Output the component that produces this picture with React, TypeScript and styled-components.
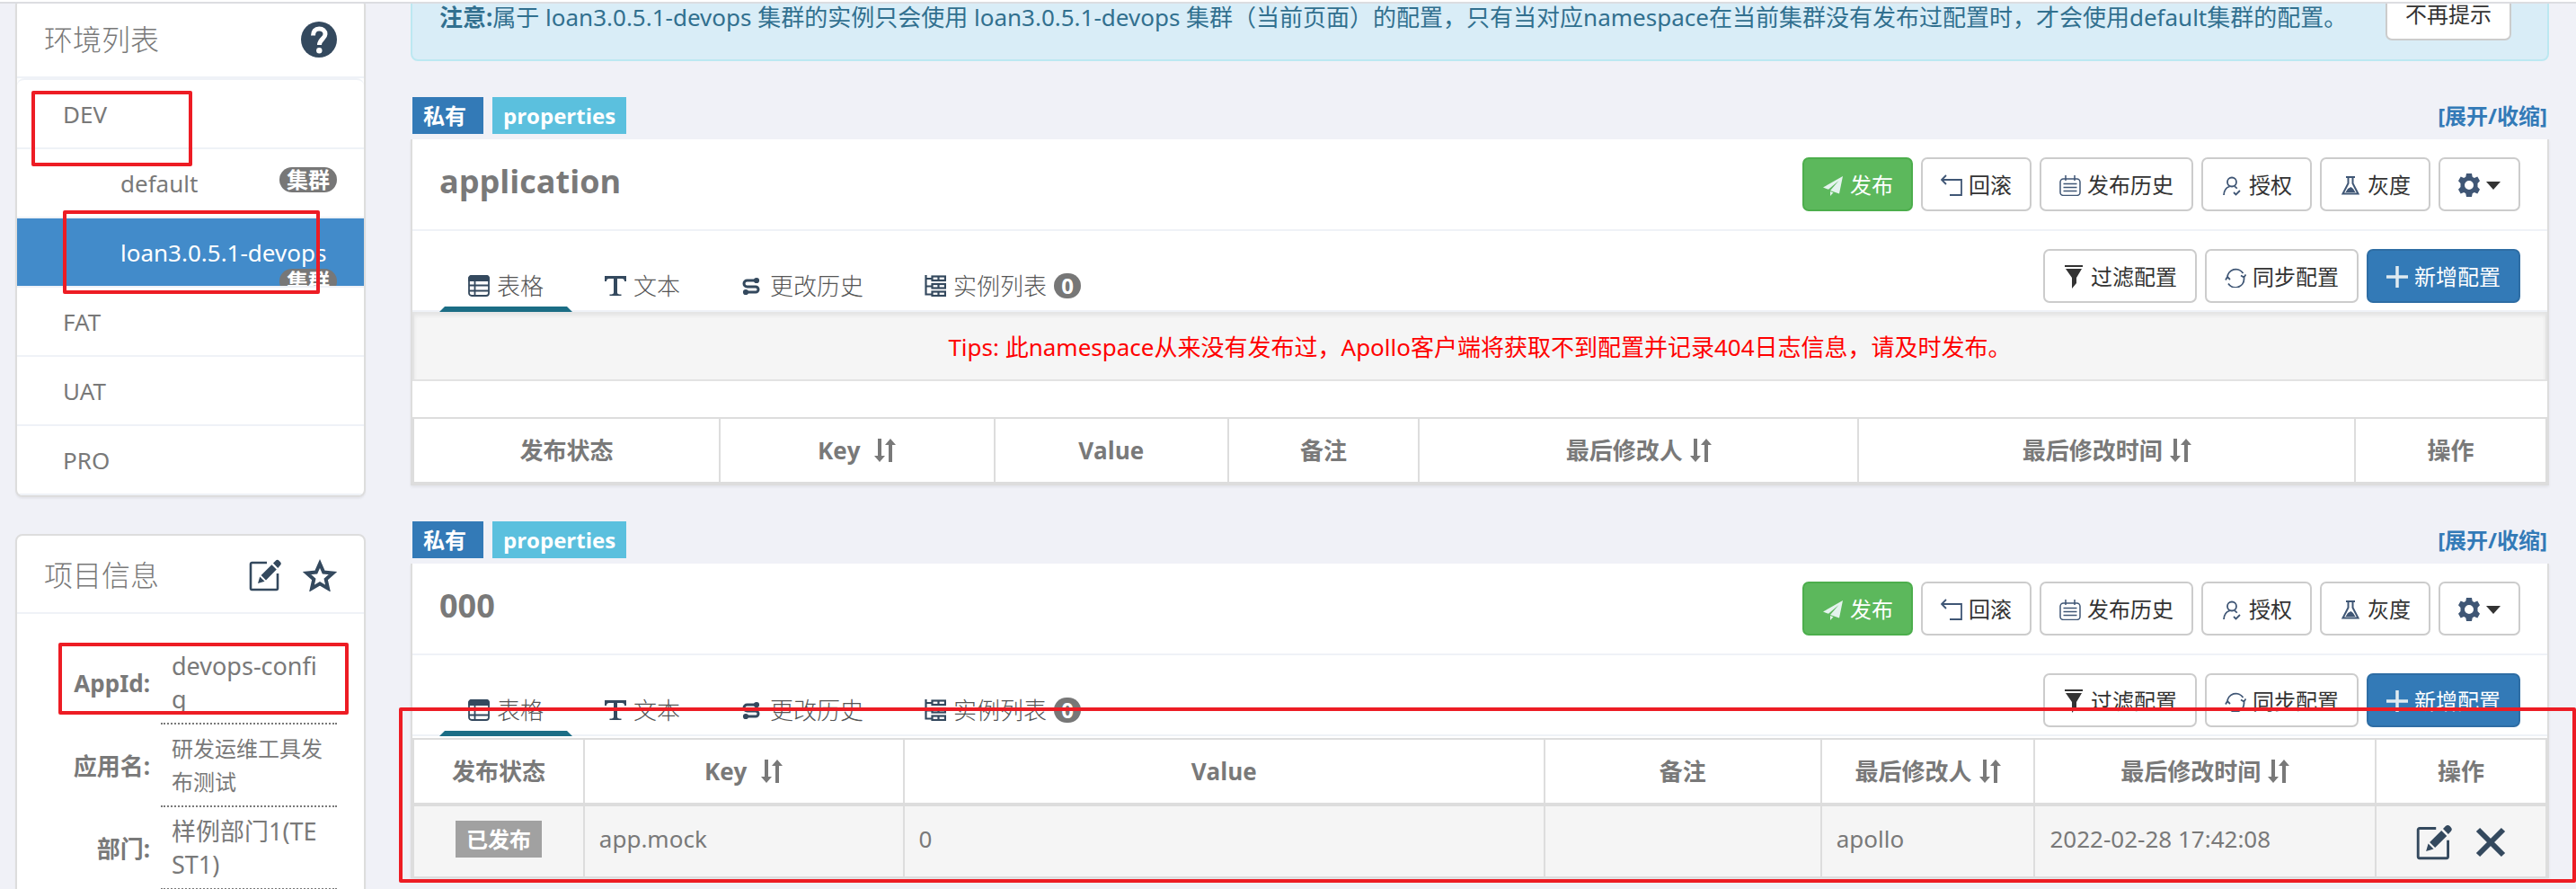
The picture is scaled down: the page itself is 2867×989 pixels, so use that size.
import React from "react";
import styled, { createGlobalStyle, css } from "styled-components";

const NAVY = "#34495e";
const LINE = "#ddd";
const SOFT = "#eff2f7";
const STRONG_FONT = `"Open Sans", "Noto Sans CJK SC", sans-serif`;

const GlobalStyle = createGlobalStyle`
  * { box-sizing: border-box; }
  body {
    margin: 0;
    background: #f0f1f7;
    color: #797979;
    font: 26px/36px "Noto Sans", "Noto Sans CJK SC", sans-serif;
  }
  button { font: inherit; color: inherit; cursor: pointer; }
  a { color: inherit; text-decoration: none; }
  svg { display: block; flex: none; }
`;

/* ---------- page frame ---------- */

const Page = styled.div`
  position: relative;
  height: 100vh;
  overflow: hidden;
  display: flex;
  flex-direction: column;
`;

const TopEdge = styled.div`
  height: 4px;
  flex: none;
  background: #fff;
  border-bottom: 2px solid #dcdde1;
`;

const Viewport = styled.div`
  flex: 1;
  min-height: 0;
  overflow: hidden;
  display: flex;
  align-items: flex-start;
  gap: 50px;
  padding: 0 30px 0 17px;
`;

const Sidebar = styled.aside`
  width: 390px;
  flex: none;
  margin-top: -6px;
  display: flex;
  flex-direction: column;
  gap: 41px;
`;

const Main = styled.main`
  flex: 1;
  min-width: 0;
  margin-top: -42px;
  display: flex;
  flex-direction: column;
  gap: 40px;
`;

/* ---------- sidebar ---------- */

const Panel = styled.section`
  background: #fff;
  border: 2px solid ${LINE};
  border-radius: 8px;
  box-shadow: 0 2px 2px rgba(0, 0, 0, 0.05);
  overflow: hidden;
`;

const PanelHead = styled.header`
  height: 87px;
  padding: 2px 30px 0;
  border-bottom: 2px solid ${SOFT};
  display: flex;
  align-items: center;
  gap: 24px;
`;

const PanelTitle = styled.h2`
  margin: 0;
  flex: 1;
  font-size: 32px;
  line-height: 40px;
  font-weight: 300;
`;

const IconButton = styled.button`
  padding: 0;
  border: 0;
  background: none;
  color: ${NAVY};
  display: inline-flex;
`;

const EnvList = styled.ul`
  list-style: none;
  margin: 0;
  padding: 0;
  border-top: 2px solid ${SOFT};
  border-radius: 8px 8px 0 0;
`;

const EnvItem = styled.li<{ $active?: boolean }>`
  height: 77px;
  overflow: hidden;
  border-bottom: 2px solid ${SOFT};
  ${(p) => p.$active && css`background: #428bca; color: #fff;`}
`;

const EnvLink = styled.a<{ $nested?: boolean }>`
  display: flex;
  flex-wrap: wrap;
  justify-content: space-between;
  height: 77px;
  padding: 20px 30px 0 ${(p) => (p.$nested ? 115 : 51)}px;
`;

const ClusterBadge = styled.span`
  height: 28px;
  margin-left: auto;
  padding: 0 8px;
  border-radius: 14px;
  background: #777;
  color: #fff;
  font-size: 24px;
  line-height: 28px;
  font-weight: 700;
`;

const InfoTable = styled.table`
  width: 100%;
  margin: 31px 0;
  border-collapse: collapse;
  th {
    width: 160px;
    padding: 8px 12px 8px 0;
    text-align: right;
    font-weight: 700;
    white-space: nowrap;
  }
  td { padding: 0 30px 0 0; }
`;

const InfoValue = styled.div<{ $compact?: boolean }>`
  padding: 8px 12px;
  border-bottom: 2px dotted #797979;
  line-height: 37px;
  font-size: ${(p) => (p.$compact ? 24 : 27)}px;
  word-break: break-all;
`;

/* ---------- main ---------- */

const Notice = styled.div`
  display: flex;
  align-items: center;
  gap: 30px;
  padding: 21px 40px 21px 30px;
  border: 2px solid #bce8f1;
  border-radius: 8px;
  background: #d9edf7;
  color: #31708f;
`;

const NoticeText = styled.p`
  flex: 1;
  margin: 0;
  padding-top: 8px;
`;

const Button = styled.button<{ $tone?: "success" | "primary" }>`
  height: 60px;
  padding: 2px 20px 0;
  border: 2px solid #ccc;
  border-radius: 7px;
  background: #fff;
  color: #333;
  font-size: 24px;
  line-height: 34px;
  display: inline-flex;
  align-items: center;
  gap: 7px;
  white-space: nowrap;
  svg { color: #3f5675; }
  ${(p) => p.$tone === "success" && css`
    background: #5cb85c; border-color: #4cae4c; color: #fff;
    svg { color: #e4f3ee; }
  `}
  ${(p) => p.$tone === "primary" && css`
    background: #337ab7; border-color: #2e6da4; color: #fff;
    svg { color: #e0eaf0; }
  `}
`;

const LabelRow = styled.div`
  display: flex;
  align-items: center;
  gap: 10px;
  height: 41px;
  margin: 0 2px 6px;
`;

const Label = styled.span<{ $color: string }>`
  display: inline-block;
  height: 41px;
  padding: 0 12px;
  background: ${(p) => p.$color};
  color: #fff;
  font-family: ${STRONG_FONT};
  font-size: 24px;
  line-height: 41px;
  font-weight: 700;
`;

const ScopeLabel = styled(Label)`
  padding-right: 19px;
`;

const FoldLink = styled.a`
  margin-left: auto;
  color: #337ab7;
  font-size: 24px;
  font-weight: 700;
`;

const Card = styled.div`
  background: #fff;
  border: 2px solid ${LINE};
  border-width: 0 2px;
  box-shadow: 0 2px 3px rgba(0, 0, 0, 0.06);
`;

const CardHead = styled.header`
  display: flex;
  justify-content: space-between;
  height: 102px;
  padding: 20px 30px;
  border-bottom: 2px solid ${SOFT};
`;

const CardTitle = styled.h3`
  margin: 0;
  font-family: ${STRONG_FONT};
  font-size: 36px;
  line-height: 54px;
  font-weight: 700;
`;

const ButtonRow = styled.div`
  display: flex;
  gap: 9px;
`;

const ToolBar = styled.div`
  display: flex;
  justify-content: space-between;
  height: 90px;
  padding: 20px 30px 0;
  border-bottom: 2px solid ${SOFT};
`;

const Tabs = styled.nav`
  display: flex;
  align-items: flex-end;
  gap: 4px;
  margin-bottom: -2px;
`;

const Tab = styled.button<{ $active?: boolean }>`
  height: 52px;
  padding: 0 26px;
  border: 6px solid transparent;
  border-top: 0;
  border-bottom-color: ${(p) => (p.$active ? "#1b6d85" : "transparent")};
  background: none;
  color: #555;
  font-weight: 300;
  display: inline-flex;
  align-items: center;
  gap: 8px;
  white-space: nowrap;
  svg { color: ${NAVY}; }
`;

const CountBadge = styled.span`
  width: 30px;
  height: 28px;
  border-radius: 14px;
  background: #777;
  color: #fff;
  font-size: 24px;
  line-height: 28px;
  font-weight: 700;
  text-align: center;
`;

const Tips = styled.p`
  margin: 0 0 40px;
  padding: 22px 20px 18px;
  border: 2px solid #e3e3e3;
  border-top: 0;
  background: #f5f5f5;
  box-shadow: inset 0 4px 4px rgba(0, 0, 0, 0.07);
  color: #f00;
  line-height: 35px;
  text-align: center;
`;

const DataTable = styled.table<{ $spaced?: boolean }>`
  width: 100%;
  margin-top: ${(p) => (p.$spaced ? 2 : 0)}px;
  table-layout: fixed;
  border-collapse: separate;
  border-spacing: 0;
  border: 2px solid ${LINE};
  border-bottom: 0;
  th, td { border-right: 2px solid ${LINE}; }
  th:last-child, td:last-child { border-right: 0; }
  th {
    height: 74px;
    padding: 0 16px;
    border-bottom: 4px solid ${LINE};
    font-family: ${STRONG_FONT};
    font-weight: 700;
    white-space: nowrap;
  }
  td {
    height: 80px;
    padding: 16px 16px 0;
    border-bottom: 2px solid ${LINE};
    background: #f5f5f5;
    line-height: 40px;
    vertical-align: top;
  }
`;

const HeadCell = styled.span<{ $gap?: number }>`
  display: inline-flex;
  align-items: center;
  gap: ${(p) => p.$gap ?? 8}px;
  vertical-align: top;
`;

const SortButton = styled(IconButton)`
  color: #797979;
`;

const StatusCell = styled.td`
  text-align: center;
`;

const StatusLabel = styled(Label)`
  vertical-align: top;
`;

const RowActions = styled.div`
  display: flex;
  justify-content: center;
  gap: 26px;
  padding-top: 4px;
`;

/* Red rectangles drawn over the page */
const Mark = styled.div<{ $x: number; $y: number; $w?: number; $h: number }>`
  position: absolute;
  left: ${(p) => p.$x}px;
  top: ${(p) => p.$y}px;
  ${(p) => (p.$w ? `width: ${p.$w}px;` : "right: 0;")}
  height: ${(p) => p.$h}px;
  border: 4px solid #ed1c24;
  border-radius: 2px;
  pointer-events: none;
`;

/* ---------- icons ---------- */

type IconProps = { size?: number; children: React.ReactNode; stroke?: number };

const Line = ({ size = 24, stroke = 1.5, children }: IconProps) => (
  <svg width={size} height={size} viewBox="0 0 24 24" fill="none" stroke="currentColor" strokeWidth={stroke} aria-hidden="true">
    {children}
  </svg>
);

const HelpIcon = () => (
  <svg width="40" height="40" viewBox="0 0 40 40" aria-hidden="true">
    <circle cx="20" cy="20" r="20" fill="currentColor" />
    <path d="M13.5 15.5C13.5 10.6 16 8 20.2 8c4 0 6.8 2.500 6.800 6 0 5-6.500 5.400-6.500 12" fill="none" stroke="#fff" strokeWidth="5" />
    <circle cx="20.300" cy="32.300" r="3.200" fill="#fff" />
  </svg>
);

const EditIcon = ({ size = 36 }: { size?: number }) => (
  <svg width={size} height={size} viewBox="0 0 36 36" aria-hidden="true">
    <path d="M20 4H3.500A1.500 1.500 0 0 0 2 5.500v27A1.500 1.500 0 0 0 3.500 34h27a1.500 1.500 0 0 0 1.500-1.500V16" fill="none" stroke="currentColor" strokeWidth="2.600" />
    <path d="M10 27l2.200-7.600 5.400 5.400zM13.600 18L25.400 6.200l5.400 5.400L19 23.400zM27 4.600l2.600-2.700a3 3 0 0 1 4.200 0l1 1a3 3 0 0 1 0 4.200L32.300 10z" fill="currentColor" />
  </svg>
);

const StarIcon = () => (
  <svg width="38" height="36" viewBox="0 0 38 36" aria-hidden="true">
    <path d="M19 5l4.200 9.500 10.300 1-7.800 6.900 2.300 10.200-9-5.300-9 5.300 2.300-10.200-7.800-6.900 10.300-1z" fill="none" stroke="currentColor" strokeWidth="4" />
  </svg>
);

const CloseIcon = () => (
  <svg width="34" height="40" viewBox="0 0 34 40" aria-hidden="true">
    <path d="M3 6l28 28M31 6L3 34" stroke="currentColor" strokeWidth="6" />
  </svg>
);

const SendIcon = () => (
  <svg width="24" height="24" viewBox="0 0 24 24" aria-hidden="true">
    <path d="M23 2L1 14.500l6 2.300L18.500 7 9 18l10 3.500zM9 19v5l3.500-3.800z" fill="currentColor" />
  </svg>
);

const BackIcon = () => (
  <Line stroke={1.8}><path d="M6 1L1 6l5 5M1 6h22v17H10" /></Line>
);

const NotesIcon = () => (
  <Line><rect x="1" y="5" width="22" height="18.500" rx="3.500" /><path d="M7 1v6M17 1v6M4.500 10.500h15M4.500 14.500h15M4.500 18.500h15" /></Line>
);

const UserIcon = () => (
  <Line stroke={1.8}><path d="M3 23c.3-5 3-8.500 6.500-9.500" /><path d="M15 13.500c1.200.5 2 1.200 2.700 2.200M14 20l2.500 2.500 4.500-4.500" /><circle cx="12" cy="8.500" r="5" /></Line>
);

const FlaskIcon = () => (
  <Line stroke={2}><path d="M7 3h10M9.500 3v7L3.500 21.500h17L14.500 10V3" /><path d="M6.500 20l2.500-4 3.500-2 2.500 2 2.500 4z" fill="currentColor" stroke="none" /></Line>
);

const GearIcon = () => (
  <svg width="24" height="26" viewBox="0 0 24 26" aria-hidden="true">
    <path fillRule="evenodd" fill="currentColor" d="M9 0h6l.7 3.800 2.100 1.200L21.300 3.600l2.700 4.600-2.500 2.800v4l2.500 2.800-2.700 4.600-3.500-1.400-2.100 1.200L15 26H9l-.7-3.800L6.200 21l-3.500 1.400L0 17.800 2.500 15v-4L0 8.200l2.700-4.600L6.200 5l2.100-1.200zM12 8a5 5 0 1 0 0 10 5 5 0 0 0 0-10z" />
  </svg>
);

const CaretIcon = () => (
  <svg width="16" height="9" viewBox="0 0 16 9" aria-hidden="true"><path d="M0 0h16L8 9z" fill="#333" /></svg>
);

const FilterIcon = () => (
  <svg width="24" height="30" viewBox="0 0 24 30" aria-hidden="true"><path d="M2 2h20v2H2zM3 6h18l-6 10v6l-5 6V16z" fill="#333" /></svg>
);

const SyncIcon = () => (
  <Line stroke={1.8}><path d="M3 13A9.500 9.500 0 0 1 20.500 8M21.500 11v3A9.500 9.500 0 0 1 4 19.500M1 15.500l2-3.500 3 3M18 10.500l3.500 2L23.500 9.500" /></Line>
);

const PlusIcon = () => (
  <Line stroke={3.5}><path d="M12 0v24M0 12h24" /></Line>
);

const TableIcon = () => (
  <Line stroke={1.8}><rect x="1" y="1" width="22" height="22" rx="3" /><path d="M1 6V4a3 3 0 0 1 3-3h16a3 3 0 0 1 3 3v2z" fill="currentColor" /><path d="M7.500 6v17M1 11.500h22M1 17.500h22" /></Line>
);

const TextIcon = () => (
  <svg width="24" height="24" viewBox="0 0 24 24" aria-hidden="true"><path d="M0 1h24v6h-2c0-2-1-3-3-3h-5v15c0 2 1 2.500 4.500 2.500V23h-13v-1.500C9 21.500 10 21 10 19V4H5C3 4 2 5 2 7H0z" fill="currentColor" /></svg>
);

const HistoryIcon = () => (
  <svg width="24" height="24" viewBox="0 0 24 24" fill="none" stroke="currentColor" strokeWidth="3" aria-hidden="true">
    <path d="M17 6H6.500a3.500 3.500 0 0 0 0 7H16a3 3 0 0 1 0 6H5" />
    <circle cx="17" cy="6" r="1.600" fill="currentColor" /><circle cx="5" cy="19" r="1.600" fill="currentColor" />
  </svg>
);

const TreeIcon = () => (
  <Line stroke={2.200}><path d="M1.500 0v21.500h7M1.500 4h7M1.500 12.500h7" /><rect x="8.500" y="1.500" width="14.500" height="4.500" /><rect x="8.500" y="10" width="14.500" height="4.500" /><rect x="8.500" y="18.500" width="14.500" height="4.500" /><path d="M15.500 1.500v4.500M15.500 10v4.500M15.500 18.500v4.500" /></Line>
);

const SortIcon = () => (
  <svg width="24" height="26" viewBox="0 0 24 26" aria-hidden="true">
    <path d="M4 0h4v19h4L6 26 0 19h4zM16 26h4V7h4L18 0l-6 7h4z" fill="currentColor" />
  </svg>
);

/* ---------- data and composition ---------- */

type Env = { name: string; cluster?: boolean; active?: boolean };

const envs: Env[] = [
  { name: "DEV" },
  { name: "default", cluster: true },
  { name: "loan3.0.5.1-devops", cluster: true, active: true },
  { name: "FAT" },
  { name: "UAT" },
  { name: "PRO" },
];

const info = [
  { label: "AppId:", value: "devops-config" },
  { label: "应用名:", value: "研发运维工具发布测试", compact: true },
  { label: "部门:", value: "样例部门1(TEST1)" },
];

const columns = [
  { title: "发布状态" },
  { title: "Key", sort: true, gap: 16 },
  { title: "Value" },
  { title: "备注" },
  { title: "最后修改人", sort: true },
  { title: "最后修改时间", sort: true },
  { title: "操作" },
];

type Item = { key: string; value: string; comment: string; user: string; time: string };

/* Column shares, relative to the width of the whole table */
const ConfigTable = ({ shares, items, spaced }: { shares: number[]; items: Item[]; spaced?: boolean }) => {
  const total = shares.reduce((a, b) => a + b, 0);
  return (
    <DataTable $spaced={spaced}>
      <colgroup>
        {shares.map((s, i) => <col key={i} style={{ width: `${(s / total) * 100}%` }} />)}
      </colgroup>
      <thead>
        <tr>
          {columns.map((c) => (
            <th key={c.title} scope="col">
              <HeadCell $gap={c.gap}>
                {c.title}
                {c.sort && <SortButton type="button" aria-label="排序"><SortIcon /></SortButton>}
              </HeadCell>
            </th>
          ))}
        </tr>
      </thead>
      <tbody>
        {items.map((it) => (
          <tr key={it.key}>
            <StatusCell><StatusLabel $color="#a1a1a1">已发布</StatusLabel></StatusCell>
            <td>{it.key}</td>
            <td>{it.value}</td>
            <td>{it.comment}</td>
            <td>{it.user}</td>
            <td>{it.time}</td>
            <td>
              <RowActions>
                <IconButton type="button" aria-label="修改"><EditIcon size={40} /></IconButton>
                <IconButton type="button" aria-label="删除"><CloseIcon /></IconButton>
              </RowActions>
            </td>
          </tr>
        ))}
      </tbody>
    </DataTable>
  );
};

const Namespace = ({ name, tips, children }: { name: string; tips?: string; children: React.ReactNode }) => (
  <section>
    <LabelRow>
      <ScopeLabel $color="#337ab7">私有</ScopeLabel>
      <Label $color="#5bc0de">properties</Label>
      <FoldLink href="#">[展开/收缩]</FoldLink>
    </LabelRow>
    <Card>
      <CardHead>
        <CardTitle>{name}</CardTitle>
        <ButtonRow>
          <Button type="button" $tone="success"><SendIcon />发布</Button>
          <Button type="button"><BackIcon />回滚</Button>
          <Button type="button"><NotesIcon />发布历史</Button>
          <Button type="button"><UserIcon />授权</Button>
          <Button type="button"><FlaskIcon />灰度</Button>
          <Button type="button" aria-label="更多"><GearIcon /><CaretIcon /></Button>
        </ButtonRow>
      </CardHead>
      <ToolBar>
        <Tabs>
          <Tab type="button" $active><TableIcon />表格</Tab>
          <Tab type="button"><TextIcon />文本</Tab>
          <Tab type="button"><HistoryIcon />更改历史</Tab>
          <Tab type="button"><TreeIcon />实例列表<CountBadge>0</CountBadge></Tab>
        </Tabs>
        <ButtonRow>
          <Button type="button"><FilterIcon />过滤配置</Button>
          <Button type="button"><SyncIcon />同步配置</Button>
          <Button type="button" $tone="primary"><PlusIcon />新增配置</Button>
        </ButtonRow>
      </ToolBar>
      {tips && <Tips>{tips}</Tips>}
      {children}
    </Card>
  </section>
);

export default function App() {
  return (
    <Page>
      <GlobalStyle />
      <TopEdge />
      <Viewport>
        <Sidebar>
          <Panel>
            <PanelHead>
              <PanelTitle>环境列表</PanelTitle>
              <IconButton type="button" aria-label="帮助"><HelpIcon /></IconButton>
            </PanelHead>
            <EnvList>
              {envs.map((e) => (
                <EnvItem key={e.name} $active={e.active}>
                  <EnvLink href="#" $nested={e.cluster}>
                    {e.name}
                    {e.cluster && <ClusterBadge>集群</ClusterBadge>}
                  </EnvLink>
                </EnvItem>
              ))}
            </EnvList>
          </Panel>
          <Panel>
            <PanelHead>
              <PanelTitle>项目信息</PanelTitle>
              <IconButton type="button" aria-label="编辑"><EditIcon /></IconButton>
              <IconButton type="button" aria-label="收藏"><StarIcon /></IconButton>
            </PanelHead>
            <InfoTable>
              <tbody>
                {info.map((r) => (
                  <tr key={r.label}>
                    <th scope="row">{r.label}</th>
                    <td><InfoValue $compact={r.compact}>{r.value}</InfoValue></td>
                  </tr>
                ))}
              </tbody>
            </InfoTable>
          </Panel>
        </Sidebar>
        <Main>
          <Notice role="note">
            <NoticeText>
              <strong>注意:</strong>属于 loan3.0.5.1-devops 集群的实例只会使用 loan3.0.5.1-devops 集群（当前页面）的配置，只有当对应namespace在当前集群没有发布过配置时，才会使用default集群的配置。
            </NoticeText>
            <Button type="button">不再提示</Button>
          </Notice>
          <Namespace name="application" tips="Tips: 此namespace从来没有发布过，Apollo客户端将获取不到配置并记录404日志信息，请及时发布。">
            <ConfigTable shares={[341, 306, 260, 213, 489, 553, 211]} items={[]} />
          </Namespace>
          <Namespace name="000">
            <ConfigTable
              spaced
              shares={[190, 356, 714, 308, 238, 380, 188]}
              items={[{ key: "app.mock", value: "0", comment: "", user: "apollo", time: "2022-02-28 17:42:08" }]}
            />
          </Namespace>
        </Main>
      </Viewport>
      <Mark $x={35} $y={101} $w={179} $h={84} />
      <Mark $x={70} $y={234} $w={286} $h={93} />
      <Mark $x={65} $y={715} $w={323} $h={80} />
      <Mark $x={444} $y={787} $h={195} />
    </Page>
  );
}
